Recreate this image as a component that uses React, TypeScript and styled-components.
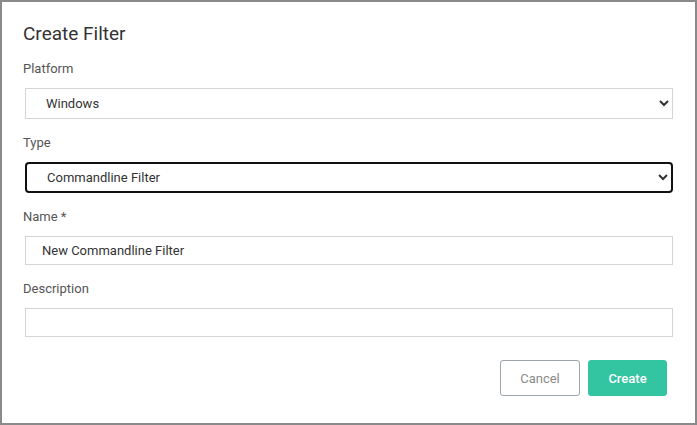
import React from "react";
import styled, { createGlobalStyle } from "styled-components";

const Global = createGlobalStyle`
  html, body { margin: 0; padding: 0; background: #ffffff; }
  body { font-family: Roboto, "Liberation Sans", Arial, sans-serif; }
  * { box-sizing: border-box; }
`;

const Dialog = styled.div`
  width: 697px;
  height: 425px;
  border: 2px solid #8a8a8a;
  background: #ffffff;
  padding: 20px 22px 0 21px;
  display: flex;
  flex-direction: column;
`;

const Title = styled.h2`
  margin: 0 0 14px 0;
  font-size: 19px;
  line-height: 24px;
  font-weight: 400;
  color: #333333;
`;

const Field = styled.div`
  display: flex;
  flex-direction: column;
  margin-bottom: 15px;
`;

const Label = styled.label`
  font-size: 13px;
  line-height: 18px;
  color: #555555;
  margin-bottom: 10px;
`;

const Select = styled.select<{ $focused?: boolean }>`
  margin-left: 2px;
  height: 31px;
  font-family: Roboto, "Liberation Sans", Arial, sans-serif;
  font-size: 13px;
  color: #333333;
  background: #ffffff;
  padding: 0 8px 0 16px;
  border: ${(p) => (p.$focused ? "2px solid #111111" : "1px solid #d4d4d4")};
  border-radius: ${(p) => (p.$focused ? "4px" : "0")};
  outline: none;
`;

const Input = styled.input`
  margin-left: 2px;
  height: 29px;
  font-family: Roboto, "Liberation Sans", Arial, sans-serif;
  font-size: 13px;
  color: #333333;
  padding: 0 16px;
  border: 1px solid #d4d4d4;
  border-radius: 0;
  outline: none;
`;

const Actions = styled.div`
  display: flex;
  justify-content: flex-end;
  gap: 8px;
  padding-right: 6px;
  margin-top: 8px;
`;

const Button = styled.button<{ $primary?: boolean }>`
  width: ${(p) => (p.$primary ? 79 : 80)}px;
  height: 36px;
  border-radius: 3px;
  font-family: Roboto, "Liberation Sans", Arial, sans-serif;
  font-size: 13px;
  font-weight: ${(p) => (p.$primary ? 500 : 400)};
  cursor: pointer;
  color: ${(p) => (p.$primary ? "#ffffff" : "#8a8a8a")};
  background: ${(p) => (p.$primary ? "#33c4a1" : "#ffffff")};
  border: ${(p) => (p.$primary ? "1px solid #33c4a1" : "1px solid #9ca4ab")};
`;

export default function App() {
  return (
    <>
      <Global />
      <Dialog>
        <Title>Create Filter</Title>
        <Field>
          <Label>Platform</Label>
          <Select defaultValue="Windows">
            <option>Windows</option>
            <option>Linux</option>
            <option>macOS</option>
          </Select>
        </Field>
        <Field>
          <Label>Type</Label>
          <Select $focused defaultValue="Commandline Filter">
            <option>Commandline Filter</option>
            <option>Process Filter</option>
          </Select>
        </Field>
        <Field>
          <Label>Name *</Label>
          <Input defaultValue="New Commandline Filter" />
        </Field>
        <Field>
          <Label>Description</Label>
          <Input defaultValue="" />
        </Field>
        <Actions>
          <Button>Cancel</Button>
          <Button $primary>Create</Button>
        </Actions>
      </Dialog>
    </>
  );
}
